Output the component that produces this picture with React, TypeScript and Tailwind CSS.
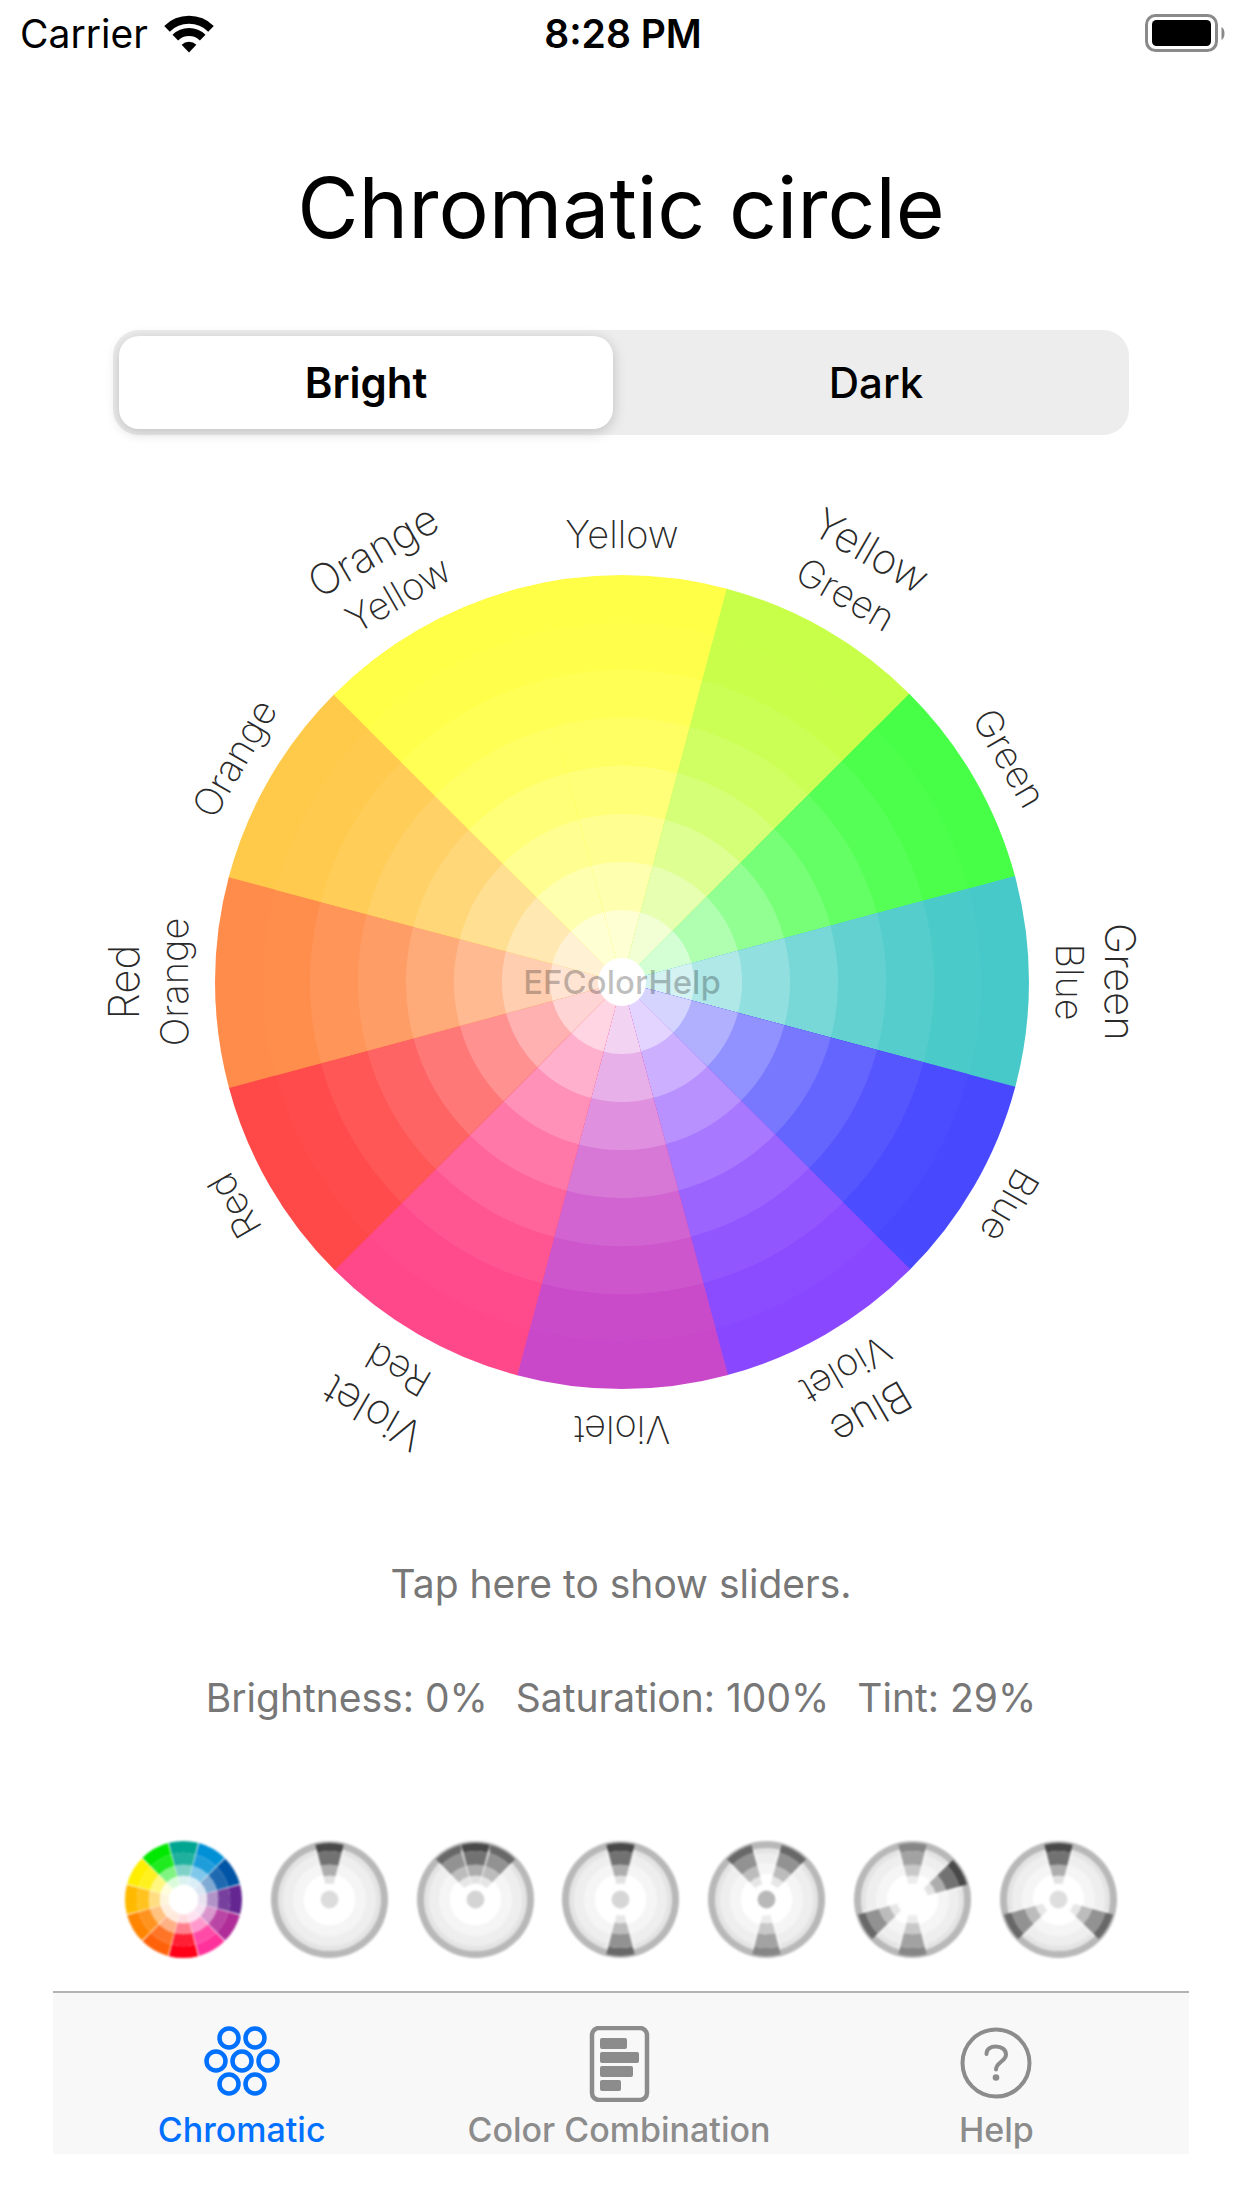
import { useState } from "react";

const point = (radius: number, degrees: number) => {
  const a = (degrees * Math.PI) / 180;
  return `${(radius * Math.sin(a)).toFixed(2)} ${(-radius * Math.cos(a)).toFixed(2)}`;
};

/* Ring segment centred on `angle`, measured clockwise from twelve o'clock. */
const segment = (inner: number, outer: number, angle: number, spread = 30) => {
  const from = angle - spread / 2;
  const to = angle + spread / 2;
  return `M${point(inner, from)}L${point(outer, from)}A${outer} ${outer} 0 0 1 ${point(outer, to)}L${point(inner, to)}A${inner} ${inner} 0 0 0 ${point(inner, from)}Z`;
};

/* Full slice from the centre out to `radius`. */
const slice = (radius: number, angle: number) => {
  const from = angle - 15.1;
  const to = angle + 15.1;
  return `M0 0L${point(radius, from)}A${radius} ${radius} 0 0 1 ${point(radius, to)}Z`;
};

const lighten = (rgb: number[], t: number) =>
  `rgb(${rgb.map((c) => Math.round(c + (255 - c) * t)).join(",")})`;

const RADII = [407, 359, 312, 264, 216, 168, 120, 72];
const TINTS = [0, 0.016, 0.076, 0.152, 0.26, 0.4, 0.57, 0.765];

const HUES = [
  { rgb: [255, 255, 72], labels: ["Yellow"] },
  { rgb: [200, 255, 72], labels: ["Green", "Yellow"] },
  { rgb: [72, 255, 72], labels: ["Green"] },
  { rgb: [72, 201, 201], labels: ["Blue", "Green"] },
  { rgb: [72, 72, 255], labels: ["Blue"] },
  { rgb: [137, 72, 255], labels: ["Violet", "Blue"] },
  { rgb: [201, 72, 201], labels: ["Violet"] },
  { rgb: [255, 72, 137], labels: ["Red", "Violet"] },
  { rgb: [255, 72, 72], labels: ["Red"] },
  { rgb: [255, 140, 74], labels: ["Orange", "Red"] },
  { rgb: [255, 201, 74], labels: ["Orange"] },
  { rgb: [255, 255, 72], labels: ["Yellow", "Orange"] },
];

function Wheel({ dark }: { dark: boolean }) {
  return (
    <svg viewBox="-543 -500 1084 1000" className="w-full max-w-[1084px]" role="img" aria-label="Chromatic circle">
      {HUES.map(({ rgb }, i) =>
        TINTS.map((tint, r) => (
          <path
            key={`${i}-${r}`}
            d={slice(RADII[r], i * 30)}
            fill={lighten(dark ? rgb.map((c) => c * 0.6) : rgb, tint)}
          />
        )),
      )}
      <circle r="24" fill="#fff" />
      {HUES.map(({ labels }, i) =>
        labels.map((label, line) => (
          <text
            key={`${i}-${line}`}
            transform={`rotate(${i * 30})`}
            y={line === 0 ? -434 : -483}
            textAnchor="middle"
            className={line === 0 ? "fill-[#2a2a2a] text-[38px] font-extralight" : "fill-[#2a2a2a] text-[42px] font-extralight"}
          >
            {label}
          </text>
        )),
      )}
      <text y="12" textAnchor="middle" className="fill-black/25 text-[33px] font-medium">
        EFColorHelp
      </text>
    </svg>
  );
}

const WEDGE_RINGS = [57, 49, 35, 24, 16];
const SHADES = {
  dark: ["#484848", "#727272", "#adadad", "#e2e2e2"],
  mid: ["#686868", "#929292", "#bcbcbc", "#e6e6e6"],
  soft: ["#868686", "#a2a2a2", "#c8c8c8", "#ececec"],
};
type Shade = keyof typeof SHADES;

const SCHEMES: { name: string; hub?: string; wedges: [number, Shade][] }[] = [
  { name: "Monochromatic", hub: "#dcdcdc", wedges: [[0, "dark"]] },
  { name: "Analogous", hub: "#d4d4d4", wedges: [[-30, "mid"], [30, "mid"], [0, "dark"]] },
  { name: "Complementary", hub: "#d6d6d6", wedges: [[0, "dark"], [180, "mid"]] },
  { name: "Split complementary", hub: "#b8b8b8", wedges: [[-30, "mid"], [30, "mid"], [180, "soft"]] },
  { name: "Tetradic", wedges: [[0, "soft"], [60, "dark"], [180, "soft"], [240, "mid"]] },
  { name: "Triadic", hub: "#dedede", wedges: [[0, "dark"], [120, "mid"], [240, "mid"]] },
];

const FULL_HUES = [
  [0, 165, 145], [0, 144, 214], [0, 84, 166], [100, 38, 145], [176, 44, 152], [255, 50, 155],
  [255, 0, 24], [255, 98, 10], [255, 132, 0], [255, 186, 0], [255, 238, 0], [0, 232, 0],
];
const FULL_RINGS = [59, 47, 35, 24, 15];
const FULL_TINTS = [0, 0.12, 0.5, 0.86];

function FullThumb() {
  return (
    <svg viewBox="-60 -60 120 120" className="w-full blur-[1px]" aria-hidden="true">
      <circle r="24" fill="#fff" />
      {FULL_HUES.map((rgb, i) =>
        FULL_TINTS.map((tint, r) => (
          <path
            key={`${i}-${r}`}
            d={segment(FULL_RINGS[r + 1], FULL_RINGS[r], i * 30, 29)}
            fill={lighten(rgb, tint)}
          />
        )),
      )}
    </svg>
  );
}

function SchemeThumb({ hub, wedges }: { hub?: string; wedges: [number, Shade][] }) {
  return (
    <svg viewBox="-60 -60 120 120" className="w-full blur-[1px]" aria-hidden="true">
      <circle r="59" fill="#b8b8b8" />
      <circle r="52" fill="#e4e4e4" />
      <circle r="47" fill="#eeeeee" />
      <circle r="37" fill="#f5f5f5" />
      <circle r="26" fill="#fff" />
      {wedges.map(([angle, shade]) => (
        <g key={angle}>
          <path d={segment(16, 52, angle, 34)} fill="#fff" fillOpacity="0.5" />
          {SHADES[shade].map((fill, r) => (
            <path key={r} d={segment(WEDGE_RINGS[r + 1], WEDGE_RINGS[r], angle, 29)} fill={fill} />
          ))}
        </g>
      ))}
      {hub && <circle r="9" fill={hub} />}
    </svg>
  );
}

function WifiIcon() {
  return (
    <svg viewBox="0 0 50 38" className="h-[38px] w-[50px]" fill="none" stroke="#000" aria-hidden="true">
      <path d="M3 13.8A31.5 31.5 0 0 1 47 13.8" strokeWidth="8" />
      <path d="M11.3 22.6A19.5 19.5 0 0 1 38.7 22.6" strokeWidth="8" />
      <path d="M25 37.5L17.6 29.8A10.6 10.6 0 0 1 32.4 29.8Z" fill="#000" stroke="none" />
    </svg>
  );
}

function BatteryIcon() {
  return (
    <svg viewBox="0 0 82 40" className="h-10 w-[82px]" aria-hidden="true">
      <rect x="2.5" y="1.5" width="70" height="35" rx="9" fill="none" stroke="#8a8a8a" strokeWidth="3" />
      <rect x="8" y="6" width="59" height="26" rx="4.5" />
      <path d="M77.5 13C81.5 15 81.5 24 77.5 26Z" fill="#8a8a8a" />
    </svg>
  );
}

function ChromaticIcon() {
  const dots = [[25, 12], [51, 12], [12, 35], [38, 35], [64, 35], [25, 58], [51, 58]];
  return (
    <svg viewBox="0 0 76 76" className="size-[76px]" fill="none" stroke="currentColor" strokeWidth="4.5" aria-hidden="true">
      {dots.map(([x, y]) => (
        <circle key={`${x}-${y}`} cx={x} cy={y} r="9.5" />
      ))}
    </svg>
  );
}

function CombinationIcon() {
  return (
    <svg viewBox="0 0 76 76" className="size-[76px]" fill="currentColor" aria-hidden="true">
      <rect x="11" y="2" width="55" height="72" rx="7" fill="none" stroke="currentColor" strokeWidth="4.5" />
      <rect x="19" y="12" width="27" height="11" rx="2" />
      <rect x="19" y="26" width="39" height="11" rx="2" />
      <rect x="19" y="40" width="33" height="11" rx="2" />
      <rect x="19" y="54" width="21" height="11" rx="2" />
    </svg>
  );
}

function HelpIcon() {
  return (
    <svg viewBox="0 0 76 76" className="size-[76px]" fill="none" stroke="currentColor" strokeWidth="4" aria-hidden="true">
      <circle cx="38" cy="37" r="33.5" />
      <path d="M28.5 28C28.5 23 32.5 20.5 38 20.5S48 23.5 48 28.5C48 35.5 38 36 38 43.5" strokeLinecap="round" />
      <circle cx="38" cy="51.5" r="3.3" fill="currentColor" stroke="none" />
    </svg>
  );
}

const TABS = [
  { label: "Chromatic", Icon: ChromaticIcon, active: true },
  { label: "Color Combination", Icon: CombinationIcon, active: false },
  { label: "Help", Icon: HelpIcon, active: false },
];

export default function App() {
  const [mode, setMode] = useState("Bright");

  return (
    <div className="flex min-h-screen flex-col bg-white pb-[54px] font-['Inter',sans-serif] text-black">
      <header className="grid h-[68px] grid-cols-3 items-center pr-4 pl-5 text-[39px] leading-[48px]">
        <div className="flex items-center gap-4">
          <span>Carrier</span>
          <WifiIcon />
        </div>
        <time className="text-center font-semibold">8:28 PM</time>
        <div className="flex justify-end">
          <BatteryIcon />
        </div>
      </header>

      <main className="flex flex-col">
        <h1 className="mt-[84px] text-center text-[84px] leading-[112px]">Chromatic circle</h1>

        <div className="mx-[113px] mt-[66px] grid grid-cols-2 rounded-[26px] bg-[#ededed] p-[6px]">
          {["Bright", "Dark"].map((name) => (
            <button
              key={name}
              type="button"
              aria-pressed={mode === name}
              onClick={() => setMode(name)}
              className={
                mode === name
                  ? "mr-2 h-[93px] rounded-[20px] bg-white text-[42px] font-semibold shadow-[0_3px_14px_rgba(0,0,0,0.2)]"
                  : "ml-2 h-[93px] rounded-[20px] text-[42px] font-medium"
              }
            >
              {name}
            </button>
          ))}
        </div>

        <div className="mt-[47px] flex justify-center">
          <Wheel dark={mode === "Dark"} />
        </div>

        <button type="button" className="mt-[78px] text-[39px] leading-[48px] text-[#777]">
          Tap here to show sliders.
        </button>
        <p className="mt-[66px] flex justify-center gap-7 text-[39px] leading-[48px] text-[#777]">
          <span>Brightness: 0%</span>
          <span>Saturation: 100%</span>
          <span>Tint: 29%</span>
        </p>

        <div className="mx-[124px] mt-[118px] flex justify-between">
          <button type="button" aria-label="Chromatic circle" className="w-[119px]">
            <FullThumb />
          </button>
          {SCHEMES.map(({ name, hub, wedges }) => (
            <button key={name} type="button" aria-label={name} className="w-[119px]">
              <SchemeThumb hub={hub} wedges={wedges} />
            </button>
          ))}
        </div>
      </main>

      <nav className="mx-[53px] mt-8 grid grid-cols-3 border-t-2 border-[#b2b2b2] bg-[#f8f8f8] pt-[33px] pr-1 pb-1">
        {TABS.map(({ label, Icon, active }) => (
          <a
            key={label}
            href="#"
            aria-current={active ? "page" : undefined}
            className={
              active
                ? "flex flex-col items-center gap-2 text-[34px] leading-[40px] font-medium text-[#0070ff]"
                : "flex flex-col items-center gap-2 text-[34px] leading-[40px] font-medium text-[#8c8c8c]"
            }
          >
            <Icon />
            {label}
          </a>
        ))}
      </nav>
    </div>
  );
}
